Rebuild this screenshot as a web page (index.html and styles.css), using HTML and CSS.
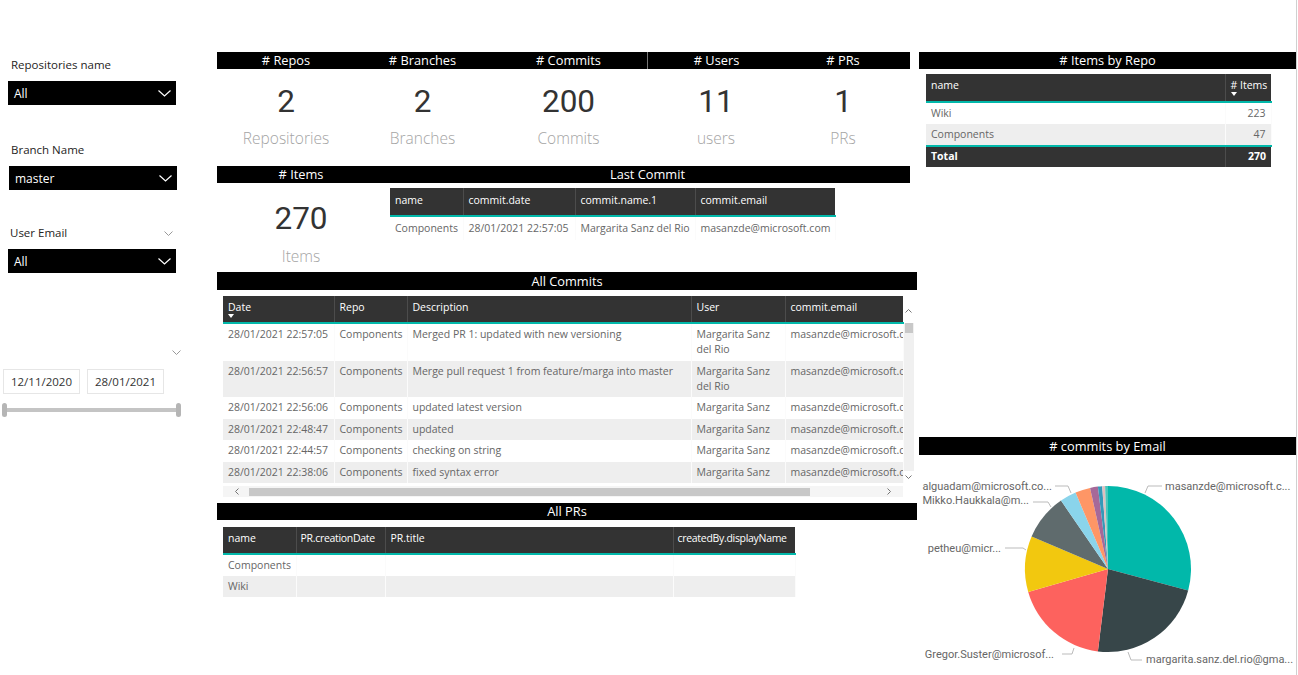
FILE: index.html
```html
<!DOCTYPE html>
<html>
<head>
<meta charset="utf-8">
<title>DevOps Report</title>
<link rel="stylesheet" href="styles.css">
</head>
<body>
<div class="page">
  <aside class="sidebar">
    <div class="slicer s1">
      <div class="slicer-label">Repositories name</div>
      <div class="dropdown"><span>All</span><svg class="chev" width="13" height="7" viewBox="0 0 13 7"><polyline points="0.5,0.5 6.5,6 12.5,0.5" fill="none" stroke="#fff" stroke-width="1.2"/></svg></div>
    </div>
    <div class="slicer s2">
      <div class="slicer-label">Branch Name</div>
      <div class="dropdown"><span>master</span><svg class="chev" width="13" height="7" viewBox="0 0 13 7"><polyline points="0.5,0.5 6.5,6 12.5,0.5" fill="none" stroke="#fff" stroke-width="1.2"/></svg></div>
    </div>
    <div class="slicer s3">
      <div class="slicer-label"><span>User Email</span><svg class="mini-chev" width="9" height="5" viewBox="0 0 9 5"><polyline points="0.5,0.5 4.5,4.5 8.5,0.5" fill="none" stroke="#999" stroke-width="1"/></svg></div>
      <div class="dropdown"><span>All</span><svg class="chev" width="13" height="7" viewBox="0 0 13 7"><polyline points="0.5,0.5 6.5,6 12.5,0.5" fill="none" stroke="#fff" stroke-width="1.2"/></svg></div>
    </div>
    <div class="date-slicer">
      <div class="date-top"><svg class="mini-chev" width="9" height="5" viewBox="0 0 9 5"><polyline points="0.5,0.5 4.5,4.5 8.5,0.5" fill="none" stroke="#999" stroke-width="1"/></svg></div>
      <div class="date-inputs">
        <div class="date-box">12/11/2020</div>
        <div class="date-box">28/01/2021</div>
      </div>
      <div class="range">
        <div class="handle"></div>
        <div class="track"></div>
        <div class="handle"></div>
      </div>
    </div>
  </aside>

  <main class="main">
    <section class="kpis">
      <div class="card k1"><div class="vh"># Repos</div><div class="num">2</div><div class="cap">Repositories</div></div>
      <div class="card k2"><div class="vh"># Branches</div><div class="num">2</div><div class="cap">Branches</div></div>
      <div class="card k3"><div class="vh"># Commits</div><div class="num">200</div><div class="cap">Commits</div></div>
      <div class="card k4"><div class="vh vh-div"># Users</div><div class="num">11</div><div class="cap">users</div></div>
      <div class="card k5"><div class="vh vh-pr"># PRs</div><div class="num num-pr">1</div><div class="cap cap-pr">PRs</div></div>
    </section>

    <section class="row2">
      <div class="card items-card"><div class="vh"># Items</div><div class="num num-items">270</div><div class="cap cap-items">Items</div></div>
      <div class="lastcommit">
        <div class="vh">Last Commit</div>
        <table class="tbl last-tbl">
          <colgroup><col class="w73"><col class="w112"><col class="w120"><col class="w140"></colgroup>
          <thead><tr><th>name</th><th>commit.date</th><th>commit.name.1</th><th>commit.email</th></tr></thead>
          <tbody><tr><td>Components</td><td>28/01/2021 22:57:05</td><td>Margarita Sanz del Rio</td><td>masanzde@microsoft.com</td></tr></tbody>
        </table>
      </div>
    </section>

    <section class="commits">
      <div class="vh vh18">All Commits</div>
      <div class="grid-area">
        <div class="grid-row">
          <table class="tbl commits-tbl">
            <colgroup><col class="w111"><col class="w73"><col class="w284"><col class="w94"><col class="w118"></colgroup>
            <thead><tr><th class="sorted">Date<span class="sort"></span></th><th>Repo</th><th>Description</th><th>User</th><th>commit.email</th></tr></thead>
            <tbody>
              <tr><td>28/01/2021 22:57:05</td><td>Components</td><td>Merged PR 1: updated with new versioning</td><td class="wrap">Margarita Sanz del Rio</td><td class="clip">masanzde@microsoft.com</td></tr>
              <tr class="alt"><td>28/01/2021 22:56:57</td><td>Components</td><td>Merge pull request 1 from feature/marga into master</td><td class="wrap">Margarita Sanz del Rio</td><td class="clip">masanzde@microsoft.com</td></tr>
              <tr><td>28/01/2021 22:56:06</td><td>Components</td><td>updated latest version</td><td>Margarita Sanz</td><td class="clip">masanzde@microsoft.com</td></tr>
              <tr class="alt"><td>28/01/2021 22:48:47</td><td>Components</td><td>updated</td><td>Margarita Sanz</td><td class="clip">masanzde@microsoft.com</td></tr>
              <tr><td>28/01/2021 22:44:57</td><td>Components</td><td>checking on string</td><td>Margarita Sanz</td><td class="clip">masanzde@microsoft.com</td></tr>
              <tr class="alt"><td>28/01/2021 22:38:06</td><td>Components</td><td>fixed syntax error</td><td>Margarita Sanz</td><td class="clip">masanzde@microsoft.com</td></tr>
            </tbody>
          </table>
          <div class="vscroll">
            <div class="vs-top"><svg width="7" height="4" viewBox="0 0 7 4"><polyline points="0.5,3.5 3.5,0.5 6.5,3.5" fill="none" stroke="#666" stroke-width="0.9"/></svg></div>
            <div class="vs-track"><div class="vs-thumb"></div><div class="vs-bottom"><svg width="7" height="4" viewBox="0 0 7 4"><polyline points="0.5,0.5 3.5,3.5 6.5,0.5" fill="none" stroke="#666" stroke-width="0.9"/></svg></div></div>
          </div>
        </div>
        <div class="hscroll">
          <svg class="hs-arrow" width="4" height="7" viewBox="0 0 4 7"><polyline points="3.5,0.5 0.5,3.5 3.5,6.5" fill="none" stroke="#666" stroke-width="0.9"/></svg>
          <div class="hs-thumb"></div>
          <svg class="hs-arrow hs-right" width="4" height="7" viewBox="0 0 4 7"><polyline points="0.5,0.5 3.5,3.5 0.5,6.5" fill="none" stroke="#666" stroke-width="0.9"/></svg>
        </div>
      </div>
    </section>

    <section class="prs">
      <div class="vh">All PRs</div>
      <table class="tbl prs-tbl">
        <colgroup><col class="w73"><col class="w89"><col class="w288"><col class="w122"></colgroup>
        <thead><tr><th>name</th><th class="tight">PR.creationDate</th><th>PR.title</th><th class="tight">createdBy.displayName</th></tr></thead>
        <tbody>
          <tr><td>Components</td><td></td><td></td><td></td></tr>
          <tr class="alt"><td>Wiki</td><td></td><td></td><td></td></tr>
        </tbody>
      </table>
    </section>
  </main>

  <aside class="right">
    <section class="byrepo">
      <div class="vh"># Items by Repo</div>
      <table class="tbl repo-tbl">
        <colgroup><col class="w299"><col class="w46"></colgroup>
        <thead><tr><th>name</th><th class="sorted num-col"># Items<span class="sort"></span></th></tr></thead>
        <tbody>
          <tr><td>Wiki</td><td class="r">223</td></tr>
          <tr class="alt"><td>Components</td><td class="r">47</td></tr>
        </tbody>
        <tfoot><tr><td>Total</td><td class="r">270</td></tr></tfoot>
      </table>
    </section>
    <section class="pie">
      <div class="vh vh18"># commits by Email</div>
      <svg class="pie-svg" width="377" height="220" viewBox="0 0 377 220">
        <path d="M189,114 L189,31 A83,83 0 0 1 269.17,135.48 Z" fill="#01B8AA"/>
        <path d="M189,114 L269.17,135.48 A83,83 0 0 1 178.88,196.38 Z" fill="#374649"/>
        <path d="M189,114 L178.88,196.38 A83,83 0 0 1 109.21,136.88 Z" fill="#FD625E"/>
        <path d="M189,114 L109.21,136.88 A83,83 0 0 1 112.60,81.57 Z" fill="#F2C80F"/>
        <path d="M189,114 L112.60,81.57 A83,83 0 0 1 141.99,45.60 Z" fill="#5F6B6D"/>
        <path d="M189,114 L141.99,45.60 A83,83 0 0 1 156.57,37.60 Z" fill="#8AD4EB"/>
        <path d="M189,114 L156.57,37.60 A83,83 0 0 1 171.04,32.97 Z" fill="#FE9666"/>
        <path d="M189,114 L171.04,32.97 A83,83 0 0 1 178.88,31.62 Z" fill="#A66999"/>
        <path d="M189,114 L178.88,31.62 A83,83 0 0 1 183.21,31.20 Z" fill="#3599B8"/>
        <path d="M189,114 L183.21,31.20 A83,83 0 0 1 186.10,31.05 Z" fill="#DFBFBF"/>
        <path d="M189,114 L186.10,31.05 A83,83 0 0 1 189,31 Z" fill="#4AC5BB"/>
        <g class="leaders" fill="none" stroke="#bbb" stroke-width="1">
          <polyline points="226,38 229,31 243,31"/>
          <polyline points="136,31 149,31 152,38"/>
          <polyline points="114,47 129,47 132,52"/>
          <polyline points="86,93 104,93 107,95"/>
          <polyline points="143,199 153,199 155,193"/>
          <polyline points="209,197 212,205 223,205"/>
        </g>
        <g class="pie-labels">
          <text x="246" y="35">masanzde@microsoft.c...</text>
          <text x="133" y="35" text-anchor="end">alguadam@microsoft.co...</text>
          <text x="110" y="49" text-anchor="end">Mikko.Haukkala@m...</text>
          <text x="82" y="97" text-anchor="end">petheu@micr...</text>
          <text x="135" y="203" text-anchor="end">Gregor.Suster@microsof...</text>
          <text x="227" y="208">margarita.sanz.del.rio@gma...</text>
        </g>
      </svg>
    </section>
  </aside>
  <div class="edge"></div>
</div>
</body>
</html>
```

FILE: styles.css
```css
* { box-sizing: border-box; }
html, body { margin: 0; padding: 0; background: #fff; }
body {
  font-family: "Open Sans", "Noto Sans", sans-serif;
  color: #252423;
  width: 1298px;
  height: 675px;
  overflow: hidden;
}
.page { display: flex; height: 675px; }

/* ---------- sidebar ---------- */
.sidebar { width: 217px; flex: none; padding-top: 57px; display: flex; flex-direction: column; }
.slicer-label {
  font-size: 11.5px; line-height: 16px; margin-left: 11px; color: #252423;
  display: flex; justify-content: space-between; align-items: center; width: 163px;
}
.s3 .slicer-label { margin-left: 10px; }
.s2 { margin-top: 37px; }
.s3 { margin-top: 35px; }
.dropdown {
  margin-top: 8px; margin-left: 8px; width: 168px; height: 24px;
  background: #000; color: #fff; font-size: 12px;
  display: flex; align-items: center; justify-content: space-between;
  padding: 0 5px 0 6px;
}
.s2 .dropdown { margin-left: 9px; }
.chev { display: block; }
.mini-chev { display: block; }
.date-slicer { margin-top: 73px; }
.date-top { height: 12px; display: flex; justify-content: flex-end; align-items: center; width: 181px; }
.date-inputs { display: flex; gap: 7px; margin-top: 11px; margin-left: 3px; }
.date-box {
  width: 77px; height: 25px; border: 1px solid #e6e6e6; font-size: 11.5px;
  display: flex; align-items: center; justify-content: center; color: #333;
}
.range { display: flex; align-items: center; margin-top: 9px; margin-left: 2px; width: 179px; height: 14px; }
.track { flex: 1; height: 4px; background: #c4c4c4; }
.handle { width: 5px; height: 14px; border-radius: 2.5px; background: #b5b5b5; }

/* ---------- visual headers ---------- */
.vh {
  height: 17px; background: #000; color: #fff; font-size: 12.8px; line-height: 17px;
  text-align: center; white-space: nowrap;
}
.vh18 { height: 18px; line-height: 18px; }
.vh-div { border-left: 1px solid #777; }
.vh-pr { padding-right: 9px; }

/* ---------- main ---------- */
.main { width: 702px; flex: none; padding-top: 52px; display: flex; flex-direction: column; }
.kpis { display: flex; width: 693px; height: 114px; }
.card { display: flex; flex-direction: column; align-items: center; }
.card .vh { align-self: stretch; }
.k1 { width: 138px; }
.k2 { width: 135px; }
.k3 { width: 157px; }
.k4 { width: 138px; }
.k5 { width: 125px; }
.num { font-family: Roboto, sans-serif; font-size: 31.5px; line-height: 36px; margin-top: 15px; color: #333; }
.cap { font-size: 15.5px; line-height: 20px; margin-top: 8px; color: #a4a4a4; font-weight: 300; }
.num-pr, .cap-pr { margin-right: 9px; }

.row2 { display: flex; width: 693px; height: 106px; }
.items-card { width: 168px; }
.num-items { margin-top: 18px; }
.cap-items { margin-top: 9px; }
.lastcommit { width: 525px; }

/* ---------- tables ---------- */
.tbl { border-collapse: collapse; table-layout: fixed; font-size: 10.5px; }
.tbl th {
  background: #333; color: #fff; font-weight: normal; text-align: left;
  padding: 4px 5px 6px; line-height: 15px; height: 27px;
  border-right: 1px solid #4c4c4c; border-bottom: 2px solid #01B8AA;
  white-space: nowrap; vertical-align: top; position: relative;
}
.tbl th:last-child { border-right: none; }
.tbl th.tight { letter-spacing: -0.3px; padding-left: 4px; }
.tbl td {
  color: #666; padding: 3px 5px 3.5px; line-height: 15px; white-space: nowrap;
  vertical-align: top; overflow: hidden; border-right: 1px solid #fbfbfb;
}
.tbl tr.alt td { background: #eeeeee; }
.tbl td.wrap { white-space: normal; }
.tbl td.clip { text-overflow: clip; }
.tbl td.r { text-align: right; }
.sort {
  position: absolute; left: 5px; top: 18px; width: 0; height: 0;
  border-left: 3.5px solid transparent; border-right: 3.5px solid transparent; border-top: 4px solid #fff;
}

.w73 { width: 73px; } .w89 { width: 89px; } .w111 { width: 111px; } .w112 { width: 112px; }
.w118 { width: 118px; } .w120 { width: 120px; } .w122 { width: 122px; } .w140 { width: 140px; }
.w284 { width: 284px; } .w288 { width: 288px; } .w94 { width: 94px; } .w299 { width: 299px; } .w46 { width: 46px; }

.last-tbl { width: 445px; margin-top: 5px; margin-left: 5px; }
.last-tbl th { height: 28px; padding-top: 5px; }
.last-tbl td { padding-top: 4px; }

.commits { width: 700px; height: 231px; }
.grid-area { margin-left: 6px; margin-top: 6px; width: 690px; }
.grid-row { display: flex; }
.commits-tbl { width: 680px; }
.vscroll { width: 10px; display: flex; flex-direction: column; }
.vs-top { height: 27px; display: flex; justify-content: center; align-items: center; padding-top: 2px; }
.vs-track { flex: 1; background: #f0f0f0; display: flex; flex-direction: column; justify-content: space-between; align-items: center; }
.vs-thumb { width: 8px; height: 10px; background: #c8c8c8; }
.vs-bottom { height: 12px; display: flex; align-items: center; justify-content: center; background: #fff; width: 10px; }
.hscroll {
  margin-top: 3px; width: 680px; height: 11px; background: #f5f5f5;
  display: flex; align-items: center; padding: 0 12px;
}
.hs-arrow { display: block; flex: none; }
.hs-thumb { width: 561px; height: 8px; background: #c8c8c8; margin-left: 10px; }
.hs-right { margin-left: auto; }

.prs { width: 700px; }
.prs-tbl { width: 572px; margin-top: 7px; margin-left: 6px; }
.prs-tbl td { padding-bottom: 3px; }

/* ---------- right column ---------- */
.right { width: 377px; flex: none; padding-top: 52px; display: flex; flex-direction: column; }
.byrepo { height: 386px; }
.repo-tbl { width: 345px; margin-top: 5px; margin-left: 7px; }
.repo-tbl th { height: 28px; }
.repo-tbl td { padding: 3px 5px 3px; }
.repo-tbl tfoot td {
  background: #333; color: #fff; font-weight: bold; border-top: 2px solid #01B8AA;
  border-right: 1px solid #4c4c4c; padding: 2px 5px 3px;
}
.repo-tbl tfoot td:last-child { border-right: none; }
.pie-svg { display: block; }
.pie-labels text { font-family: Roboto, sans-serif; font-size: 11px; fill: #666; }
.edge { width: 1px; background: #d0d0d0; flex: none; }
```
